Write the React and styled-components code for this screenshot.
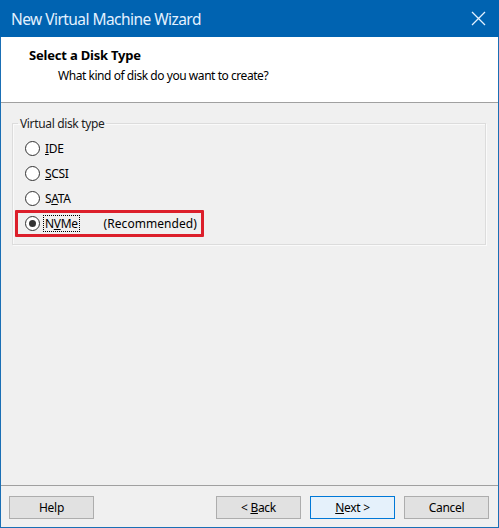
import React from "react";
import styled, { createGlobalStyle } from "styled-components";

const Global = createGlobalStyle`
  html, body { margin: 0; padding: 0; background: #f0f0f0; }
  body { font-family: "Noto Sans", "Liberation Sans", sans-serif; }
  *, *::before, *::after { box-sizing: border-box; }
`;

const Window = styled.div`
  width: 499px;
  height: 528px;
  display: flex;
  flex-direction: column;
  border: 1px solid #1a6fb5;
  border-top: none;
  background: #f0f0f0;
`;

const TitleBar = styled.div`
  height: 37px;
  margin: 0 -1px;
  background: #0063b1;
  display: flex;
  align-items: center;
  justify-content: space-between;
  padding: 0 13px 0 11px;
  flex-shrink: 0;
`;

const Title = styled.div`
  color: #e3f1ff;
  font-size: 15.5px;
  letter-spacing: -0.55px;
`;

const CloseButton = styled.div`
  width: 16px;
  height: 16px;
  display: flex;
  align-items: center;
  justify-content: center;
`;

const Header = styled.div`
  height: 66px;
  background: #fff;
  border-bottom: 1px solid #a0a0a0;
  padding: 10px 0 0 28px;
  flex-shrink: 0;
`;

const HeaderTitle = styled.div`
  font-weight: 700;
  font-size: 13px;
  line-height: 16px;
  letter-spacing: -0.2px;
  color: #000;
`;

const HeaderSub = styled.div`
  font-size: 12px;
  line-height: 16px;
  letter-spacing: -0.45px;
  margin-top: 5px;
  padding-left: 29px;
  color: #000;
`;

const Body = styled.div`
  flex: 1;
  padding: 13px 12px 0 11px;
`;

const GroupBox = styled.fieldset`
  margin: 0;
  border: 1px solid #dcdcdc;
  box-shadow: inset 1px 1px 0 #fafafa, 1px 1px 0 #fafafa;
  padding: 5px 12px 8px 12px;
  display: flex;
  flex-direction: column;
`;

const Legend = styled.legend`
  font-size: 12px;
  line-height: 15px;
  letter-spacing: -0.35px;
  color: #222;
  padding: 0 2px;
  margin-left: -7px;
`;

const RadioRow = styled.label`
  position: relative;
  height: 25px;
  display: flex;
  align-items: center;
  gap: 3px;
  font-size: 12px;
  letter-spacing: -0.35px;
  color: #000;
  ${(p) =>
    p.$highlight &&
    `
    &::before {
      content: "";
      position: absolute;
      left: -10px;
      top: -1px;
      width: 189px;
      height: 27px;
      border: 3px solid #dc1f2b;
      border-radius: 1px;
    }
  `}
`;

const Circle = styled.span`
  width: 15px;
  height: 15px;
  border-radius: 50%;
  border: 1px solid #333;
  background: #fff;
  display: flex;
  align-items: center;
  justify-content: center;
  flex-shrink: 0;
  &::after {
    content: "";
    width: 7px;
    height: 7px;
    border-radius: 50%;
    background: ${(p) => (p.$checked ? "#333" : "transparent")};
  }
`;

const RadioLabel = styled.span`
  display: inline-flex;
  align-items: center;
  height: 17px;
  padding: 0 1px;
  border: 1px dotted ${(p) => (p.$focused ? "#000" : "transparent")};
`;

const Note = styled.span`
  margin-left: 21px;
  letter-spacing: 0.05px;
`;

const Footer = styled.div`
  height: 42px;
  border-top: 1px solid #a0a0a0;
  display: flex;
  align-items: flex-start;
  padding: 10px 9px 0 8px;
  gap: 9px;
  flex-shrink: 0;
`;

const Spacer = styled.div`
  flex: 1;
`;

const Button = styled.div`
  width: 85px;
  height: 23px;
  display: flex;
  align-items: center;
  justify-content: center;
  font-size: 12px;
  letter-spacing: -0.3px;
  color: #000;
  background: ${(p) => (p.$default ? "#e5f1fb" : "#e1e1e1")};
  border: 1px solid ${(p) => (p.$default ? "#0078d7" : "#adadad")};
`;

const Radio = ({ checked, focused, highlight, children, note }) => (
  <RadioRow $highlight={highlight}>
    <Circle $checked={checked} />
    <RadioLabel $focused={focused}>
      <span>{children}</span>
    </RadioLabel>
    {note && <Note>{note}</Note>}
  </RadioRow>
);

export default function App() {
  return (
    <>
      <Global />
      <Window>
        <TitleBar>
          <Title>New Virtual Machine Wizard</Title>
          <CloseButton>
            <svg width="15" height="15" viewBox="0 0 15 15">
              <path d="M1 1 L14 14 M14 1 L1 14" stroke="#e3f1ff" strokeWidth="1.3" />
            </svg>
          </CloseButton>
        </TitleBar>
        <Header>
          <HeaderTitle>Select a Disk Type</HeaderTitle>
          <HeaderSub>What kind of disk do you want to create?</HeaderSub>
        </Header>
        <Body>
          <GroupBox>
            <Legend>Virtual disk type</Legend>
            <Radio>
              <u>I</u>DE
            </Radio>
            <Radio>
              <u>S</u>CSI
            </Radio>
            <Radio>
              S<u>A</u>TA
            </Radio>
            <Radio checked focused highlight note="(Recommended)">
              N<u>V</u>Me
            </Radio>
          </GroupBox>
        </Body>
        <Footer>
          <Button>
            <span>Help</span>
          </Button>
          <Spacer />
          <Button>
            <span>
              &lt; <u>B</u>ack
            </span>
          </Button>
          <Button $default>
            <span>
              <u>N</u>ext &gt;
            </span>
          </Button>
          <Button>
            <span>Cancel</span>
          </Button>
        </Footer>
      </Window>
    </>
  );
}
